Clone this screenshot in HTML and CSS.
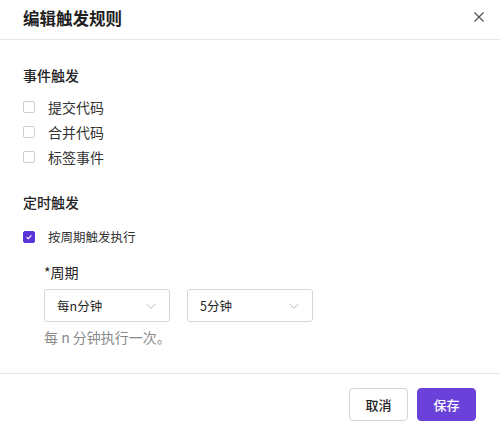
FILE: index.html
```html
<!DOCTYPE html>
<html lang="zh-CN">
<head>
    <meta charset="UTF-8">
    <meta name="viewport" content="width=device-width, initial-scale=1.0">
    <title>编辑触发规则</title>
    <link rel="stylesheet" href="styles.css">
</head>
<body>
    <div class="dialog">
        <!-- 标题栏 -->
        <div class="dialog-header">
            <h1 class="dialog-title">编辑触发规则</h1>
            <button class="close-btn" aria-label="关闭">
                <svg viewBox="0 0 12 12" xmlns="http://www.w3.org/2000/svg">
                    <path d="M1.5 1.5l9 9M10.5 1.5l-9 9"/>
                </svg>
            </button>
        </div>

        <div class="dialog-body">
            <!-- 事件触发 -->
            <h2 class="section-title">事件触发</h2>
            <div class="check-list">
                <label class="check-row"><span class="checkbox"></span><span>提交代码</span></label>
                <label class="check-row"><span class="checkbox"></span><span>合并代码</span></label>
                <label class="check-row"><span class="checkbox"></span><span>标签事件</span></label>
            </div>

            <!-- 定时触发 -->
            <h2 class="section-title timer-title">定时触发</h2>
            <label class="check-row small">
                <span class="checkbox checked">
                    <svg viewBox="0 0 12 12" xmlns="http://www.w3.org/2000/svg">
                        <path d="M3.2 6.2l1.9 1.8 3.7-3.9"/>
                    </svg>
                </span>
                <span>按周期触发执行</span>
            </label>

            <div class="period">
                <div class="field-label">*周期</div>
                <div class="select-row">
                    <div class="select">
                        <span>每n分钟</span>
                        <svg viewBox="0 0 12 12" xmlns="http://www.w3.org/2000/svg"><path d="M1.5 3.8l4.5 4.5 4.5-4.5"/></svg>
                    </div>
                    <div class="select">
                        <span>5分钟</span>
                        <svg viewBox="0 0 12 12" xmlns="http://www.w3.org/2000/svg"><path d="M1.5 3.8l4.5 4.5 4.5-4.5"/></svg>
                    </div>
                </div>
                <p class="hint">每 n 分钟执行一次。</p>
            </div>
        </div>

        <!-- 底部按钮 -->
        <div class="dialog-footer">
            <button class="btn">取消</button>
            <button class="btn primary">保存</button>
        </div>
    </div>
</body>
</html>
```

FILE: styles.css
```css
* {
    margin: 0;
    padding: 0;
    box-sizing: border-box;
}

body {
    font-family: "Noto Sans CJK SC", "Noto Sans", sans-serif;
    background: #fff;
    color: #222;
}

.dialog {
    width: 500px;
    height: 428px;
    background: #fff;
}

/* 标题栏 */
.dialog-header {
    height: 40px;
    display: flex;
    justify-content: space-between;
    align-items: center;
    padding: 0 13px 0 23px;
    border-bottom: 1px solid #e6e6e6;
}

.dialog-title {
    font-size: 16.5px;
    font-weight: 700;
    color: #1f1f1f;
    line-height: 22px;
    margin-top: -4px;
}

.close-btn {
    width: 14px;
    height: 14px;
    border: none;
    background: none;
    display: flex;
    margin-top: -3px;
}

.close-btn svg {
    width: 12px;
    height: 12px;
    stroke: #555;
    stroke-width: 1.3;
    fill: none;
}

/* 内容区 */
.dialog-body {
    padding: 24px 23px 26px;
}

.section-title {
    font-size: 14px;
    font-weight: 500;
    line-height: 22px;
    color: #222;
}

.check-list {
    margin-top: 8px;
}

.check-row {
    display: flex;
    align-items: center;
    height: 25px;
    font-size: 14px;
    color: #333;
}

.check-row.small {
    font-size: 12.5px;
    margin-top: 11px;
}

.checkbox {
    width: 12px;
    height: 12px;
    border: 1px solid #cfcfcf;
    border-radius: 2px;
    margin-right: 13px;
    display: flex;
    align-items: center;
    justify-content: center;
}

.checkbox.checked {
    background: #5b35d5;
    border-color: #5b35d5;
}

.checkbox svg {
    width: 12px;
    height: 12px;
    fill: none;
    stroke: #fff;
    stroke-width: 1.4;
}

.timer-title {
    margin-top: 22px;
}

/* 周期选择 */
.period {
    padding-left: 21px;
    margin-top: 13px;
}

.field-label {
    font-size: 14px;
    line-height: 20px;
    color: #222;
}

.select-row {
    display: flex;
    gap: 17px;
    margin-top: 7px;
}

.select {
    width: 126px;
    height: 33px;
    border: 1px solid #d6d6d6;
    border-radius: 3px;
    display: flex;
    align-items: center;
    justify-content: space-between;
    padding: 0 12px 0 12px;
    font-size: 12.5px;
    color: #222;
}

.select svg {
    width: 12px;
    height: 12px;
    fill: none;
    stroke: #bbb;
    stroke-width: 1;
}

.hint {
    margin-top: 5px;
    font-size: 14px;
    line-height: 20px;
    color: #8a8a8a;
}

/* 底部 */
.dialog-footer {
    border-top: 1px solid #e6e6e6;
    display: flex;
    justify-content: flex-end;
    gap: 9px;
    padding: 14px 24px 0;
}

.btn {
    width: 59px;
    height: 33px;
    border: 1px solid #d4d4d4;
    border-radius: 4px;
    background: #fff;
    font-family: inherit;
    font-size: 13px;
    font-weight: 500;
    color: #222;
}

.btn.primary {
    background: #6a42da;
    border-color: #6a42da;
    color: #fff;
}
```
